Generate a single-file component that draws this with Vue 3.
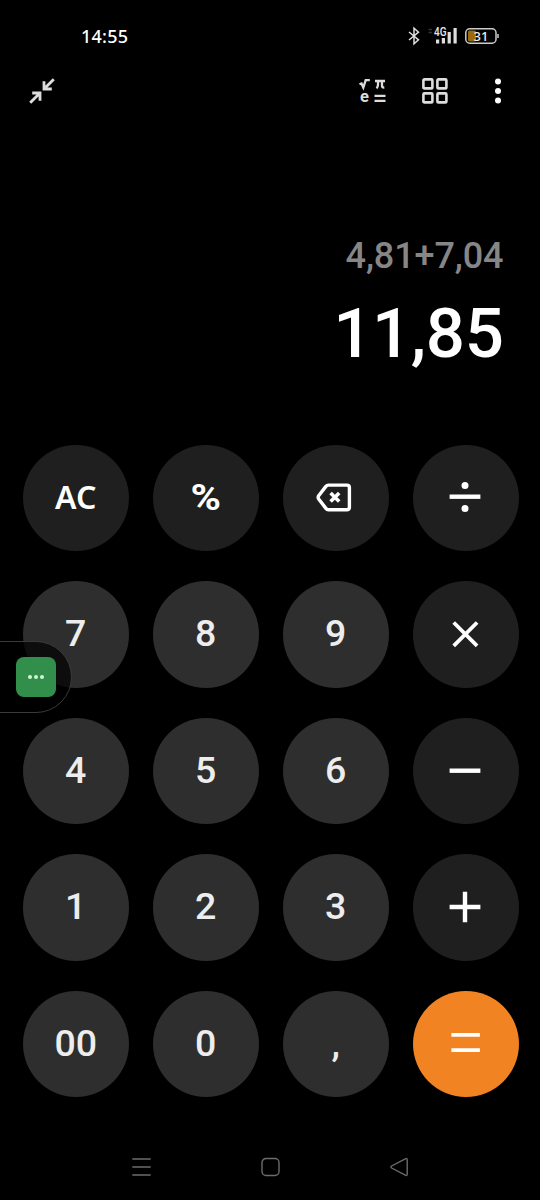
<script setup>
const keys = [
  { label: 'AC', kind: 'fn', cls: 'word' },
  { label: '%', kind: 'fn', cls: 'percent' },
  { icon: 'delete', kind: 'fn' },
  { icon: 'divide', kind: 'fn' },
  { label: '7' }, { label: '8' }, { label: '9' },
  { icon: 'times', kind: 'fn' },
  { label: '4' }, { label: '5' }, { label: '6' },
  { icon: 'minus', kind: 'fn' },
  { label: '1' }, { label: '2' }, { label: '3' },
  { icon: 'plus', kind: 'fn' },
  { label: '00', cls: 'double' }, { label: '0' }, { label: ',', cls: 'comma' },
  { icon: 'equals', kind: 'eq' },
]
</script>

<template>
  <div class="screen">
    <header class="status">
      <span class="clock">14:55</span>
      <div class="indicators">
        <svg class="bt" width="12" height="18" viewBox="0 0 12 18">
          <path d="M1 5 L10.500 12.800 L6 16.800 V1.200 L10.500 5.200 L1 13" />
        </svg>
        <svg class="signal" width="30" height="18" viewBox="0 0 30 18">
          <path class="dim" d="M.5 2.500h3.500M.5 5.500h3.500" />
          <path class="bars" d="M9.600 12.500v4M15.400 11v5.500M21.200 5v11.500M27.100 1v15.500" />
          <text x="6" y="9" textLength="12.500" lengthAdjust="spacingAndGlyphs">4G</text>
        </svg>
        <svg class="battery" width="34" height="16" viewBox="0 0 34 16">
          <rect class="level" x="3" y="2.500" width="8" height="11" rx="1.500" />
          <rect class="case" x=".8" y=".8" width="30.200" height="14.400" rx="4" />
          <path class="case" d="M33 6v4" />
          <text x="16" y="12.600">31</text>
        </svg>
      </div>
    </header>

    <nav class="toolbar">
      <svg class="collapse" width="26" height="26" viewBox="0 0 26 26">
        <path d="M24.800 1.200 L15.500 10.500 M15 3.200 V11 H22.800 M1.200 24.800 L10.500 15.500 M3.200 15 H11 V22.800" />
      </svg>
      <svg class="science" width="27" height="26" viewBox="0 0 27 26">
        <path d="M.5 6.300 L2.500 5.500 L4.300 9.600 L6.700 2.100 H10.800" />
        <path d="M16 3 H26 M19 3 V6.500 Q19 9 17.500 10.300 M23 3 V8 Q23 9.700 25.300 9.500" />
        <path d="M15.500 17.800 H26.500 M15.500 22.900 H26.500" />
        <text x="1" y="24">e</text>
      </svg>
      <svg class="tiles" width="26" height="26" viewBox="0 0 26 26">
        <rect x="1.400" y="1.400" width="9" height="9" rx="1" />
        <rect x="15.400" y="1.400" width="9" height="9" rx="1" />
        <rect x="1.400" y="15.400" width="9" height="9" rx="1" />
        <rect x="15.400" y="15.400" width="9" height="9" rx="1" />
      </svg>
      <svg class="more" width="6" height="26" viewBox="0 0 6 26">
        <circle cx="3" cy="3.400" r="3" />
        <circle cx="3" cy="13" r="3" />
        <circle cx="3" cy="22.600" r="3" />
      </svg>
    </nav>

    <section class="display">
      <div class="expression">4,81+7,04</div>
      <div class="result">11,85</div>
    </section>

    <main class="keypad">
      <button v-for="(key, i) in keys" :key="i" class="key" :class="key.kind">
        <span v-if="key.label" :class="key.cls">{{ key.label }}</span>
        <svg v-else width="40" height="40" viewBox="0.6 0.300 40 40">
          <g v-if="key.icon === 'delete'" class="round">
            <path d="M13 7.400 H31.500 Q34 7.400 34 9.900 V29.500 Q34 32 31.500 32 H13 Q11.500 32 10.500 30.700 L3.300 21.300 Q2.200 19.700 3.300 18.100 L10.500 8.700 Q11.500 7.400 13 7.400 Z" />
            <path class="cross" d="M15.200 15.200 L23.800 23.800 M23.800 15.200 L15.200 23.800" />
          </g>
          <g v-else-if="key.icon === 'divide'">
            <path d="M4.200 19 H35" />
            <circle cx="19.600" cy="7.700" r="3.500" />
            <circle cx="19.600" cy="30.700" r="3.500" />
          </g>
          <path v-else-if="key.icon === 'times'" class="slim" d="M8.300 8.800 L31.700 32.200 M31.700 8.800 L8.300 32.200" />
          <path v-else-if="key.icon === 'minus'" d="M4.200 20 H35" />
          <path v-else-if="key.icon === 'plus'" d="M4.200 20.300 H35 M19.600 5 V35.500" />
          <path v-else class="slim" d="M6 11.200 H34.500 M6 26.400 H34.500" />
        </svg>
      </button>
    </main>

    <footer class="navbar">
      <svg width="20" height="20" viewBox="0 0 20 20"><path d="M1.300 2 H19.700 M1.300 10 H19.700 M1.300 18 H19.700" /></svg>
      <svg width="20" height="20" viewBox="0 0 20 20"><rect x="2" y="1.500" width="17" height="17" rx="4" /></svg>
      <svg width="20" height="20" viewBox="0 0 20 20"><path d="M16.300 1.800 Q18.200 1 18.200 2.700 V17.300 Q18.200 19 16.300 18.200 L2.600 11 Q1.200 10 2.600 9 Z" /></svg>
    </footer>

    <aside class="bubble">
      <span class="chip"><i></i><i></i><i></i></span>
    </aside>
  </div>
</template>

<style>
body {
  margin: 0;
  background: #000;
}
</style>

<style scoped>
.screen {
  position: relative;
  box-sizing: border-box;
  width: 540px;
  height: 1200px;
  overflow: hidden;
  background: #000;
  color: #fff;
  font-family: Roboto, sans-serif;
}
svg {
  display: block;
  overflow: visible;
  fill: none;
  stroke: #fff;
}
text {
  stroke: none;
}
.status {
  display: flex;
  justify-content: space-between;
  align-items: center;
  height: 73px;
  padding: 0 41px 0 81px;
}
.clock {
  font: 500 18px/20px "Noto Sans", sans-serif;
  letter-spacing: 0.25px;
  padding-bottom: 2px;
}
.indicators {
  display: flex;
  align-items: center;
  padding-bottom: 1px;
}
.bt {
  stroke: #ddd;
  stroke-width: 1.5;
  margin-right: 8px;
}
.signal {
  margin-right: 7px;
}
.signal .dim {
  stroke: #333;
  stroke-width: 1.6;
}
.signal .bars {
  stroke: #ddd;
  stroke-width: 3.2;
}
.signal text {
  fill: #e8e8e8;
  stroke: #000;
  stroke-width: 2px;
  paint-order: stroke;
  font: 500 12.5px Roboto, sans-serif;
}
.battery .case {
  stroke: #ccc;
  stroke-width: 1.5;
}
.battery .level {
  fill: #9a6a0c;
  stroke: none;
}
.battery text {
  fill: #eee;
  font: 500 13px "Noto Sans", sans-serif;
  text-anchor: middle;
}
.toolbar {
  display: flex;
  align-items: center;
  height: 36px;
  padding: 0 39px 0 29px;
}
.collapse {
  margin-right: auto;
  stroke: #ddd;
  stroke-width: 2.8;
}
.science {
  margin-right: 36px;
  stroke: #ddd;
  stroke-width: 2.3;
}
.science text {
  fill: #ddd;
  font: 700 16.5px/1 Roboto, sans-serif;
}
.tiles {
  margin-right: 47px;
  stroke: #ddd;
  stroke-width: 2.6;
}
.more {
  fill: #fff;
  stroke: none;
}
.display {
  height: 335.5px;
  padding: 124px 36.5px 0 0;
  box-sizing: border-box;
  text-align: right;
  font-weight: 500;
}
.expression {
  font-size: 36px;
  line-height: 46px;
  letter-spacing: -0.1px;
  color: #868686;
}
.result {
  font-size: 69px;
  line-height: 80px;
  letter-spacing: -0.4px;
  margin-top: 15px;
}
.keypad {
  display: grid;
  grid-template-columns: repeat(4, 106.500px);
  grid-auto-rows: 106.500px;
  gap: 30px 23.500px;
  padding-left: 22.500px;
}
.key {
  display: flex;
  align-items: center;
  justify-content: center;
  padding: 0;
  border: 0;
  border-radius: 50%;
  background: #2e2e2e;
  color: #ededed;
  font: 500 37.500px/44px Roboto, sans-serif;
}
.key span {
  padding-bottom: 2px;
}
.key.fn {
  background: #1f1f1f;
  color: #fff;
}
.key.eq {
  background: #f18322;
}
.key .word {
  font: 600 32px/44px "Noto Sans", sans-serif;
  padding-bottom: 1px;
}
.key .percent {
  font-weight: 700;
  transform: scaleX(1.1);
}
.key svg {
  stroke-width: 4.4;
}
.key svg circle {
  fill: #fff;
  stroke: none;
}
.key .slim {
  stroke-width: 3.8;
}
.key .round {
  stroke-width: 3.4;
}
.key .cross {
  stroke-width: 3.6;
}
.navbar {
  display: flex;
  justify-content: space-between;
  padding: 60px 131px 0;
}
.navbar svg {
  stroke: #6c6c6c;
  stroke-width: 1.4;
}
.bubble {
  position: absolute;
  left: -2px;
  top: 641px;
  width: 74px;
  height: 72px;
  box-sizing: border-box;
  border: 1.500px solid #3a3a3a;
  border-radius: 0 36px 36px 0;
  background: rgba(0, 0, 0, 0.7);
  display: flex;
  align-items: center;
  padding-left: 17px;
}
.chip {
  display: flex;
  align-items: center;
  justify-content: center;
  gap: 2px;
  width: 39.5px;
  height: 40px;
  border-radius: 8px;
  background: #318f4b;
}
.chip i {
  width: 4px;
  height: 4px;
  border-radius: 50%;
  background: #d2f5d6;
}
</style>
